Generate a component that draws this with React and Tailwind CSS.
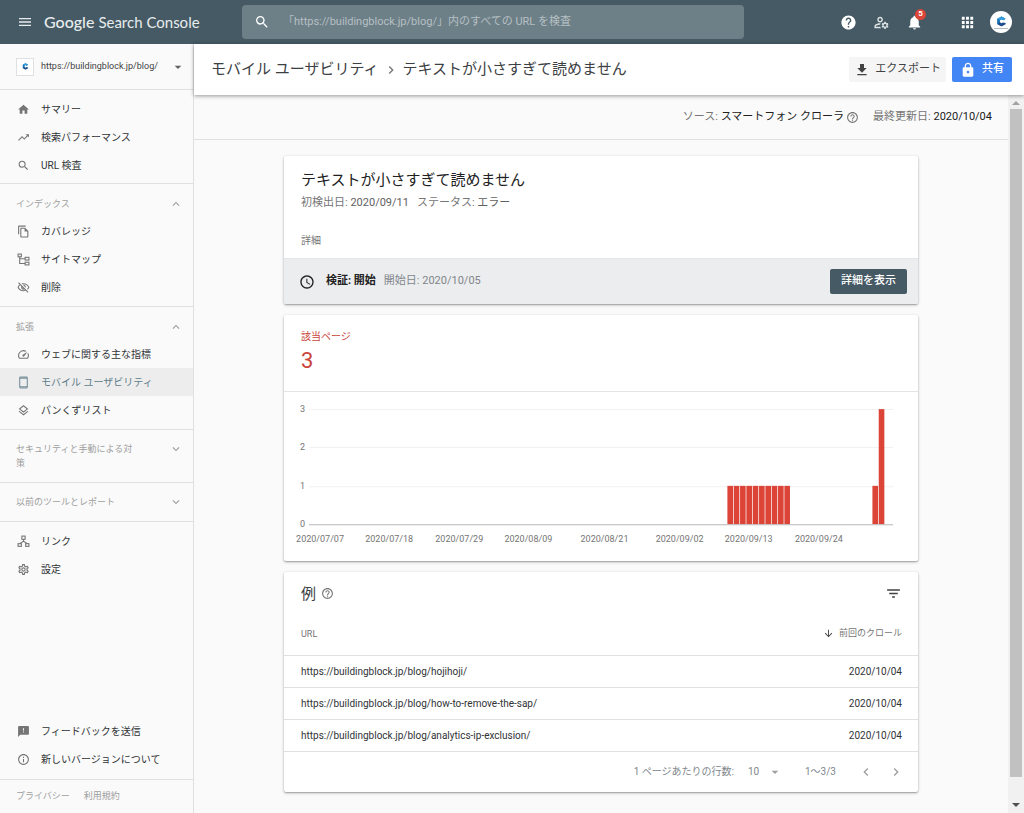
import {
  MdMenu, MdSearch, MdHelp, MdNotifications, MdApps, MdHome, MdTrendingUp,
  MdOutlineFileCopy, MdOutlineVisibilityOff, MdOutlineManageAccounts, MdSpeed,
  MdOutlineLayers, MdExpandLess, MdExpandMore, MdFeedback, MdInfoOutline,
  MdOutlineSettings, MdGetApp, MdLock, MdHelpOutline, MdAccessTime,
  MdFilterList, MdArrowDownward, MdArrowDropDown, MdChevronLeft, MdChevronRight,
} from "react-icons/md";

function SitemapIcon({ className }) {
  return (
    <svg viewBox="0 0 24 24" className={className} fill="none" stroke="currentColor" strokeWidth="2">
      <rect x="2" y="2" width="6" height="5" />
      <rect x="15" y="8" width="7" height="5" />
      <rect x="15" y="17" width="7" height="5" />
      <path d="M5 7v12.500h10M5 10.500h10" />
    </svg>
  );
}

function LinksIcon({ className }) {
  return (
    <svg viewBox="0 0 24 24" className={className} fill="none" stroke="currentColor" strokeWidth="2">
      <rect x="9" y="2" width="6" height="6" />
      <rect x="2" y="16" width="6" height="5" />
      <rect x="16" y="16" width="6" height="5" />
      <path d="M12 8v4M5 16l7-4.500 7 4.500" />
    </svg>
  );
}

function PhoneIcon({ className }) {
  return (
    <svg viewBox="0 0 24 24" className={className} fill="none" stroke="currentColor" strokeWidth="2">
      <rect x="5" y="2" width="14" height="20" rx="1.500" />
      <path d="M5 4h14M5 20h14" />
    </svg>
  );
}

function BrandMark({ className }) {
  return (
    <svg viewBox="0 0 24 24" className={className}>
      <path d="M12 1 3 6v12l9 5 9-5v-3l-6-1-3 2-4-3V10l4-3 4 2 5-3z" fill="#1b4f8f" />
      <path d="M12 1 3 6l5 4 4-3 4 2 5-3z" fill="#2f9fe0" />
      <path d="M3 6v12l5-5v-3z" fill="#1279bd" />
    </svg>
  );
}

function NavItem({ icon: Icon, label, active }) {
  return (
    <li>
      <a
        href="#"
        aria-current={active ? "page" : undefined}
        className={
          active
            ? "flex h-7 items-center gap-[11px] bg-[#ededed] pl-[17px] text-[#607d8b]"
            : "flex h-7 items-center gap-[11px] pl-[17px] text-[#303336]"
        }
      >
        <Icon className={active ? "size-[13px] text-[#78909c]" : "size-[13px] text-[#757575]"} />
        <span className="whitespace-nowrap">{label}</span>
      </a>
    </li>
  );
}

function GroupHeader({ label, open }) {
  const Chevron = open ? MdExpandLess : MdExpandMore;
  return (
    <button type="button" aria-expanded={open} className="flex w-full items-start justify-between pl-4 pr-[10px] text-left text-[9px] leading-[14px] text-[#9e9e9e]">
      <span className="w-[121px]">{label}</span>
      <Chevron className="size-[14px]" />
    </button>
  );
}

function Sidebar() {
  return (
    <aside className="flex w-[194px] shrink-0 flex-col border-r border-[#e0e0e0] bg-[#fafafa] text-[10px]">
      <button type="button" className="flex h-[46px] items-center border-b border-[#e0e0e0] pl-4 pr-[7px] text-[#424242]">
        <span className="flex size-[18px] items-center justify-center border border-[#e0e0e0] bg-white">
          <BrandMark className="size-[7px]" />
        </span>
        <span className="ml-[7px] flex-1 text-left text-[9px]">https://buildingblock.jp/blog/</span>
        <MdArrowDropDown className="size-4 text-[#616161]" />
      </button>
      <nav className="flex flex-1 flex-col">
        <ul className="border-b border-[#e0e0e0] pb-1 pt-[5px]">
          <NavItem icon={MdHome} label="サマリー" />
          <NavItem icon={MdTrendingUp} label="検索パフォーマンス" />
          <NavItem icon={MdSearch} label="URL 検査" />
        </ul>
        <div className="border-b border-[#e0e0e0] pb-[5px] pt-[13px]">
          <GroupHeader label="インデックス" open />
          <ul className="pt-[6px]">
            <NavItem icon={MdOutlineFileCopy} label="カバレッジ" />
            <NavItem icon={SitemapIcon} label="サイトマップ" />
            <NavItem icon={MdOutlineVisibilityOff} label="削除" />
          </ul>
        </div>
        <div className="border-b border-[#e0e0e0] pb-[5px] pt-[13px]">
          <GroupHeader label="拡張" open />
          <ul className="pt-[6px]">
            <NavItem icon={MdSpeed} label="ウェブに関する主な指標" />
            <NavItem icon={PhoneIcon} label="モバイル ユーザビリティ" active />
            <NavItem icon={MdOutlineLayers} label="パンくずリスト" />
          </ul>
        </div>
        <div className="border-b border-[#e0e0e0] py-3">
          <GroupHeader label="セキュリティと手動による対策" open={false} />
        </div>
        <div className="border-b border-[#e0e0e0] py-3">
          <GroupHeader label="以前のツールとレポート" open={false} />
        </div>
        <ul className="pt-[5px]">
          <NavItem icon={LinksIcon} label="リンク" />
          <NavItem icon={MdOutlineSettings} label="設定" />
        </ul>
        <ul className="mt-auto border-b border-[#e0e0e0] pb-[6px]">
          <NavItem icon={MdFeedback} label="フィードバックを送信" />
          <NavItem icon={MdInfoOutline} label="新しいバージョンについて" />
        </ul>
      </nav>
      <footer className="flex h-[33px] items-center gap-[14px] pl-4 text-[9px] text-[#9e9e9e]">
        <a href="#">プライバシー</a>
        <a href="#">利用規約</a>
      </footer>
    </aside>
  );
}

function TopBar() {
  return (
    <header className="flex h-11 items-center bg-[#455a64] text-white">
      <button type="button" aria-label="メニュー" className="ml-[17px] text-[#e8ecee]">
        <MdMenu className="size-4" />
      </button>
      <a href="#" className="ml-[11px] flex w-[198px] items-baseline gap-1 whitespace-nowrap font-['Lato','Noto_Sans_CJK_JP',sans-serif] text-[15px] leading-5 text-[#e8ecee]">
        <span className="text-[16px] font-medium">Google</span>
        <span>Search Console</span>
      </a>
      <label className="flex h-[34px] w-[502px] shrink items-center rounded bg-[#6d7f87] pl-3">
        <MdSearch className="size-4 shrink-0" />
        <input
          type="text"
          aria-label="URL 検査"
          placeholder="「https://buildingblock.jp/blog/」内のすべての URL を検査"
          className="ml-[13px] min-w-0 flex-1 bg-transparent text-[11px] outline-none placeholder:text-[#b6bfc3]"
        />
      </label>
      <div className="ml-auto flex items-center pr-3">
        <button type="button" aria-label="ヘルプ"><MdHelp className="size-[17px]" /></button>
        <button type="button" aria-label="ユーザー設定" className="ml-4 text-[#dfe4e6]"><MdOutlineManageAccounts className="size-[17px]" /></button>
        <button type="button" aria-label="通知" className="relative ml-4">
          <MdNotifications className="size-[17px]" />
          <span className="absolute -right-[3px] -top-[5px] flex size-[11px] items-center justify-center rounded-full bg-[#db4437] text-[8px] font-bold leading-none">5</span>
        </button>
        <button type="button" aria-label="アプリ" className="ml-9"><MdApps className="size-[17px]" /></button>
        <button type="button" aria-label="アカウント" className="ml-[14px] flex size-[22px] flex-col items-center justify-center rounded-full bg-white">
          <BrandMark className="size-[11px]" />
          <span aria-hidden="true" className="mt-px h-px w-[14px] bg-[#b0bec5]" />
        </button>
      </div>
    </header>
  );
}

const card = "rounded-[2px] bg-white shadow-[0_1px_3px_rgba(0,0,0,0.3),0_1px_1px_rgba(0,0,0,0.15)]";

function IssueCard() {
  return (
    <section className={card}>
      <div className="h-[102px] px-[17px] pt-3">
        <h2 className="text-[15px] leading-6 text-[#212121]">テキストが小さすぎて読めません</h2>
        <p className="flex gap-2 text-[11px] leading-[22px] text-[#757575]">
          <span>初検出日: <span className="text-[#616161]">2020/09/11</span></span>
          <span>ステータス: <span className="text-[#616161]">エラー</span></span>
        </p>
        <p className="mt-[19px] text-[10px] leading-4 text-[#757575]">詳細</p>
      </div>
      <div className="flex h-[46px] items-center rounded-b-[2px] border-t border-[#e4e5e7] bg-[#ecedef] pl-[15px] pr-[11px] text-[11px]">
        <MdAccessTime className="size-4 text-[#212121]" />
        <span className="ml-[11px] font-bold text-[#212121]">検証: 開始</span>
        <span className="ml-2 text-[#80868b]">開始日: 2020/10/05</span>
        <button type="button" className="ml-auto h-[25px] rounded-[2px] bg-[#455a64] px-[11px] font-medium text-white">詳細を表示</button>
      </div>
    </section>
  );
}

const gridLines = [
  { value: 3, y: 17 },
  { value: 2, y: 55 },
  { value: 1, y: 94 },
];

const dateTicks = [
  { label: "2020/07/07", x: 36 },
  { label: "2020/07/18", x: 105 },
  { label: "2020/07/29", x: 175 },
  { label: "2020/08/09", x: 244 },
  { label: "2020/08/21", x: 320 },
  { label: "2020/09/02", x: 395 },
  { label: "2020/09/13", x: 464 },
  { label: "2020/09/24", x: 534 },
];

const bars = [
  ...Array.from({ length: 10 }, (_, i) => ({ x: 442.700 + i * 6.320, pages: 1 })),
  { x: 587.500, pages: 1 },
  { x: 593.800, pages: 3 },
];

function PagesChart() {
  return (
    <svg viewBox="0 0 633 169" className="block w-full" role="img" aria-label="該当ページ" fontSize="9">
      {gridLines.map((g) => (
        <g key={g.value}>
          <path d={`M25 ${g.y}.5H608`} stroke="#f1f1f1" />
          <text x="21" y={g.y + 3} textAnchor="end" fill="#757575">{g.value}</text>
        </g>
      ))}
      {bars.map((b) => (
        <rect key={b.x} x={b.x} y={132 - b.pages * 38.300} width="5.600" height={b.pages * 38.300} fill="#db4437" />
      ))}
      <path d="M25 132.500H608" stroke="#b7b7b7" />
      <text x="21" y="135" textAnchor="end" fill="#757575">0</text>
      {dateTicks.map((t) => (
        <text key={t.label} x={t.x} y="150" textAnchor="middle" fill="#757575">{t.label}</text>
      ))}
    </svg>
  );
}

function ChartCard() {
  return (
    <section className={card}>
      <div className="h-[77px] border-b border-[#e4e4e4] px-[17px] pt-[14px] text-[#c9443a]">
        <h3 className="text-[10px] leading-4">該当ページ</h3>
        <p className="text-[22px] leading-8">3</p>
      </div>
      <PagesChart />
    </section>
  );
}

const rows = [
  { url: "https://buildingblock.jp/blog/hojihoji/", crawled: "2020/10/04" },
  { url: "https://buildingblock.jp/blog/how-to-remove-the-sap/", crawled: "2020/10/04" },
  { url: "https://buildingblock.jp/blog/analytics-ip-exclusion/", crawled: "2020/10/04" },
];

function ExamplesCard() {
  return (
    <section className={card}>
      <div className="flex h-[43px] items-center pl-[17px] pr-4">
        <h3 className="text-[15px] text-[#3c4043]">例</h3>
        <MdHelpOutline className="ml-[5px] size-[13px] text-[#757575]" />
        <button type="button" aria-label="フィルタ" className="ml-auto text-[#424242]"><MdFilterList className="size-[17px]" /></button>
      </div>
      <table className="w-full text-[10px] text-[#303336]">
        <thead>
          <tr className="h-10 border-b border-[#e0e0e0] text-[9px] text-[#757575]">
            <th className="pl-[17px] text-left font-normal">URL</th>
            <th className="pr-4 text-right font-normal">
              <button type="button" className="inline-flex items-center gap-[5px]">
                <MdArrowDownward className="size-[11px] text-[#424242]" />
                前回のクロール
              </button>
            </th>
          </tr>
        </thead>
        <tbody>
          {rows.map((r) => (
            <tr key={r.url} className="h-8 border-b border-[#e0e0e0]">
              <td className="pl-[17px]"><a href="#">{r.url}</a></td>
              <td className="pr-4 text-right">{r.crawled}</td>
            </tr>
          ))}
        </tbody>
      </table>
      <div className="flex h-10 items-center justify-end pr-[14px] text-[10px] text-[#80868b]">
        <label htmlFor="page-size">1 ページあたりの行数:</label>
        <span className="ml-[14px] flex items-center">
          <select id="page-size" defaultValue="10" className="w-4 appearance-none bg-transparent outline-none">
            <option>10</option>
            <option>25</option>
          </select>
          <MdArrowDropDown className="ml-[3px] size-4 text-[#9e9e9e]" />
        </span>
        <span className="ml-[22px]">1～3/3</span>
        <button type="button" aria-label="前のページ" className="ml-[22px] text-[#9e9e9e]"><MdChevronLeft className="size-4" /></button>
        <button type="button" aria-label="次のページ" className="ml-[14px] text-[#9e9e9e]"><MdChevronRight className="size-4" /></button>
      </div>
    </section>
  );
}

function ScrollTrack() {
  return (
    <div aria-hidden="true" className="flex w-4 shrink-0 flex-col items-center bg-[#f1f1f1] py-[6px]">
      <span className="border-x-4 border-b-4 border-x-transparent border-b-[#a3a3a3]" />
      <span className="my-1 w-3 flex-1 bg-[#c1c1c1]" />
      <span className="mt-[22px] border-x-4 border-t-4 border-x-transparent border-t-[#505050]" />
    </div>
  );
}

export default function App() {
  return (
    <div className="flex min-h-screen flex-col bg-[#fafafa] font-['Roboto','Noto_Sans_CJK_JP',sans-serif]" lang="ja">
      <TopBar />
      <div className="flex flex-1">
        <Sidebar />
        <main className="flex min-w-0 flex-1 flex-col">
          <div className="relative flex h-[51px] items-center bg-white pl-[17px] pr-3 shadow-[0_1px_4px_rgba(0,0,0,0.4)]">
            <h1 className="flex items-center gap-1 whitespace-nowrap text-[15px] text-[#3c4043]">
              <a href="#">モバイル ユーザビリティ</a>
              <MdChevronRight className="size-4 text-[#757575]" />
              <span>テキストが小さすぎて読めません</span>
            </h1>
            <button type="button" className="ml-auto flex h-[25px] items-center gap-[5px] rounded-[2px] bg-[#f5f5f5] px-[5px] text-[11px] text-[#424242]">
              <MdGetApp className="size-4" />
              エクスポート
            </button>
            <button type="button" className="ml-[6px] flex h-[25px] items-center gap-[6px] rounded-[2px] bg-[#4285f4] px-2 text-[11px] font-medium text-white">
              <MdLock className="size-4" />
              共有
            </button>
          </div>
          <div className="flex flex-1">
            <div className="min-w-0 flex-1">
              <div className="flex h-[45px] items-center justify-end border-b border-[#e0e0e0] pr-4 text-[11px] text-[#757575]">
                <span>ソース: <span className="text-[#212121]">スマートフォン クローラ</span></span>
                <MdHelpOutline className="ml-[2px] size-[13px]" />
                <span className="ml-[14px]">最終更新日: <span className="text-[#212121]">2020/10/04</span></span>
              </div>
              <div className="mx-auto flex max-w-[634px] flex-col gap-[11px] py-4">
                <IssueCard />
                <ChartCard />
                <ExamplesCard />
              </div>
            </div>
            <ScrollTrack />
          </div>
        </main>
      </div>
    </div>
  );
}
